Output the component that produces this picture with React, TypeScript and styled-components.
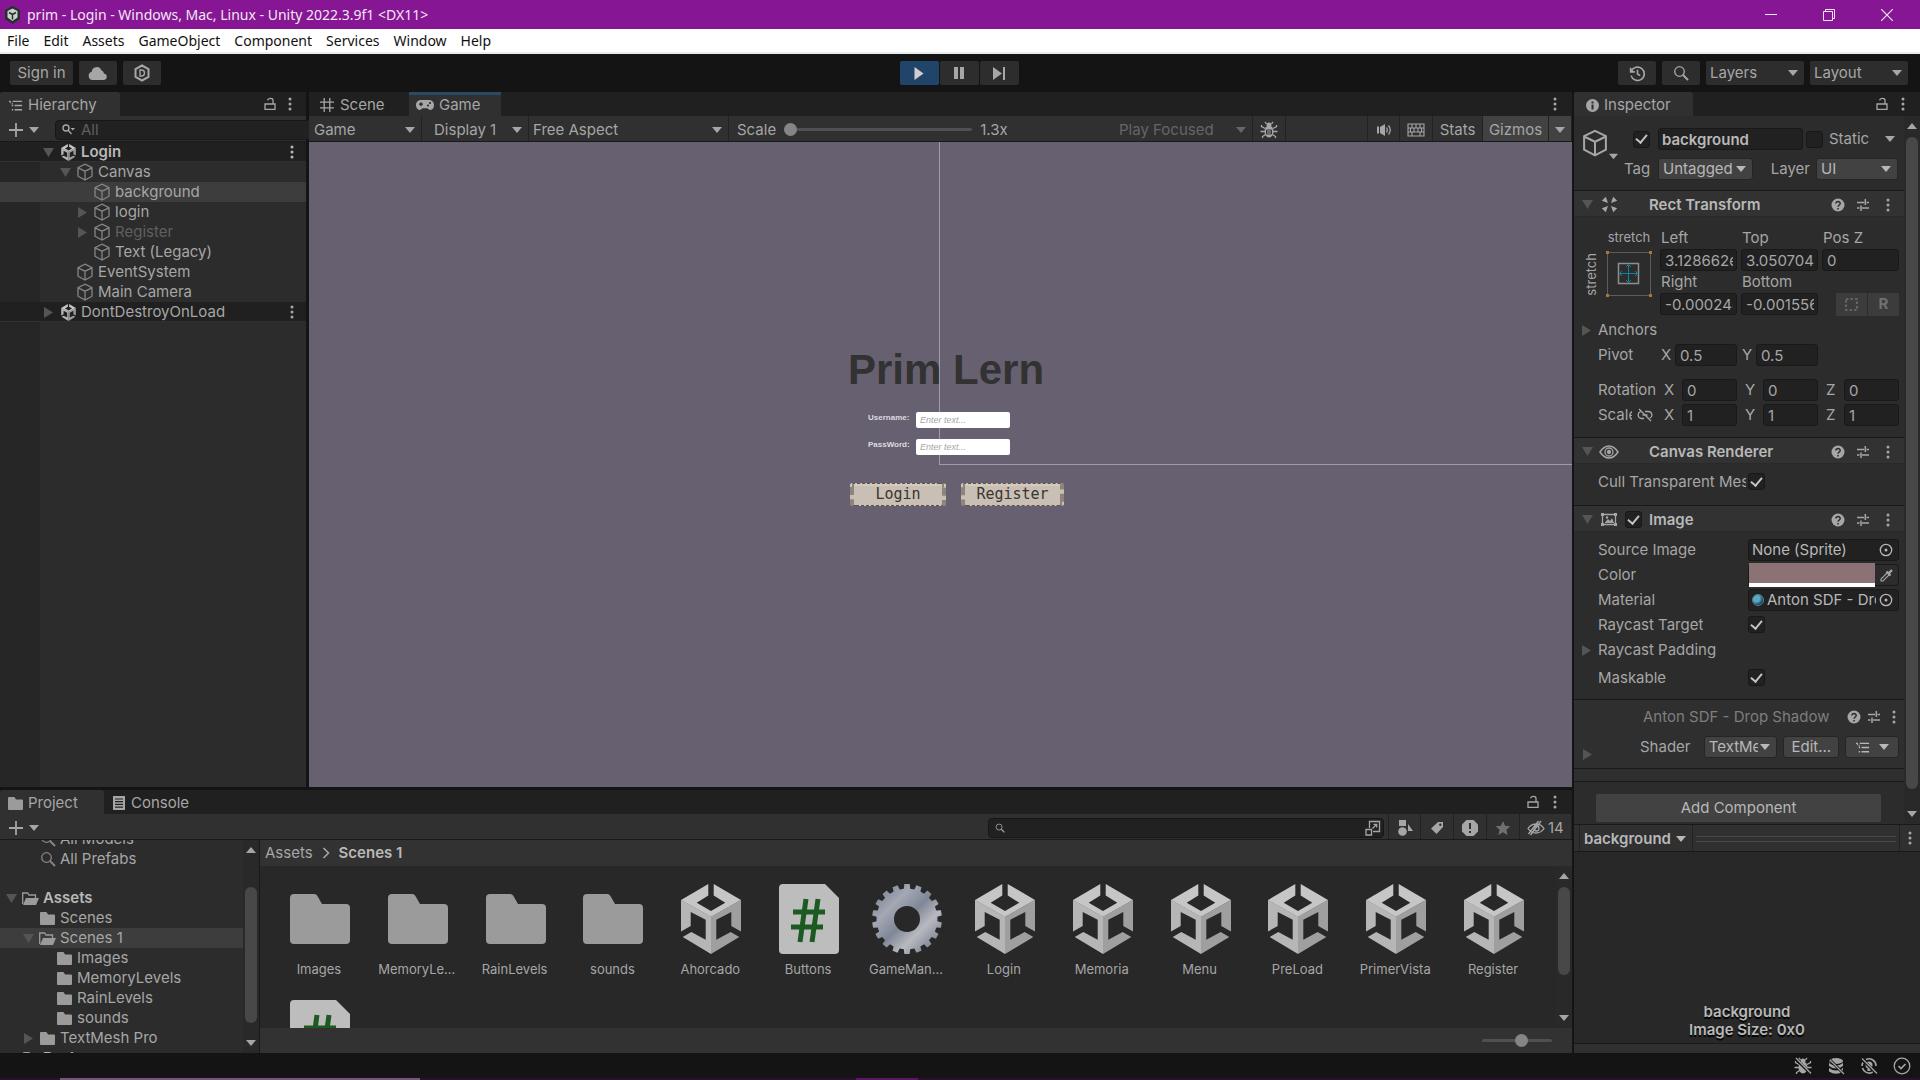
import React, { ReactNode } from 'react';
import styled, { createGlobalStyle, css } from 'styled-components';

const ui = '"Inter", "Liberation Sans", sans-serif';
const system = '"Noto Sans", "Open Sans", sans-serif';

const c = {
  frame: '#141414',
  tabBar: '#202020',
  bar: '#303030',
  panel: '#2c2c2c',
  deep: '#282828',
  field: '#212121',
  button: '#2d2d2d',
  raised: '#424242',
  line: '#191919',
  text: '#a6a6a6',
  bright: '#b8b8b8',
  dim: '#5f5f5f',
  selected: '#3d3d3d',
};

const GlobalStyle = createGlobalStyle`
  * { box-sizing: border-box; }
  body { margin: 0; background: ${c.frame}; color: ${c.text}; font: 15px/20px ${ui}; overflow: hidden; }
  button, input, select { font: inherit; color: inherit; margin: 0; }
  button { background: none; border: 0; padding: 0; }
  svg { display: block; flex: none; }
`;

/* ---------- Icons ---------- */

type IconProps = { w?: number; h?: number };

const Svg = ({ w = 16, h, box = '0 0 16 16', children }: IconProps & { box?: string; children: ReactNode }) => (
  <svg width={w} height={h ?? w} viewBox={box} fill="none" stroke="currentColor" strokeWidth="1.3" aria-hidden="true">
    {children}
  </svg>
);

const Caret = ({ dir = 'down', size = 10 }: { dir?: 'down' | 'up'; size?: number }) => (
  <svg width={size} height={size} viewBox="0 0 10 10" fill="currentColor" aria-hidden="true">
    <path d={dir === 'down' ? 'M0 2h10L5 8z' : 'M0 8h10L5 2z'} />
  </svg>
);

const FoldArrow = ({ dir }: { dir: 'down' | 'right' }) => (
  <svg width="11" height="11" viewBox="0 0 11 11" fill="currentColor" aria-hidden="true">
    <path d={dir === 'down' ? 'M0 1h11L5.500 10z' : 'M1 0v11l9-5.500z'} />
  </svg>
);

const UnityMark = ({ w = 60, h = 70 }: IconProps) => (
  <svg width={w} height={h} viewBox="0 0 60 70" aria-hidden="true">
    <path fill="#c6c6c6" d="M27.3 0 0 16l30 17 30-17L32.7 0v11.5l11.6 7.2L30 27l-14.3-8.3 11.6-7.2z" />
    <path fill="#b6b6b6" d="M0 15.8 30 32.8V70L1.7 53l8.6-5 14.4 7.7v-20L9.7 28v14L0 47.5z" />
    <path fill="#9f9f9f" d="M60 15.8 30 32.8V70l28.3-17-8.6-5-14.4 7.7v-20l15-7.7v14l9.7 5.5z" />
  </svg>
);

const CubeIcon = ({ w = 18 }: IconProps) => (
  <Svg w={w} box="0 0 18 18">
    <path d="M9 1.2 16 4.6v8.6l-7 3.8-7-3.8V4.6zM2 4.8l7 3.4 7-3.4M9 8.2V17" />
  </Svg>
);

const Dots = () => (
  <svg width="4" height="14" viewBox="0 0 4 14" fill="currentColor" aria-hidden="true">
    <circle cx="2" cy="2" r="1.5" />
    <circle cx="2" cy="7" r="1.5" />
    <circle cx="2" cy="12" r="1.5" />
  </svg>
);

const LockIcon = () => (
  <Svg w={14} h={14} box="0 0 14 14">
    <path d="M2 7h10v5.4H2zM10 7V3.2Q10 1.4 7.5 1.4T4.6 3.4" />
  </Svg>
);

const ListIcon = () => (
  <Svg w={15}>
    <path d="M5 3.5h10M7 8h8M7 12.5h8M1 3.5h2M4 8h1.5M4 12.5h1.5" strokeWidth="1.4" />
    <path d="M2.5 4v1.5M4.5 5v2" strokeWidth="1" />
  </Svg>
);

const GridIcon = () => (
  <Svg w={16}>
    <path d="M5.2 1v14M10.8 1v14M1 5.2h14M1 10.8h14" />
  </Svg>
);

const PadIcon = () => (
  <svg width="18" height="12" viewBox="0 0 18 12" aria-hidden="true">
    <path fill="currentColor" d="M5 1h8c3 0 5 2.200 5 5s-1.500 5-3.500 5c-1.500 0-2.500-1.800-3.500-1.800H7C6 9.200 5 11 3.500 11 1.500 11 0 8.800 0 6s2-5 5-5z" />
    <path stroke="#222" strokeWidth="1.300" d="M5 3.200v4M3 5.200h4" />
    <circle cx="12" cy="6.500" r="1" fill="#222" />
    <circle cx="14" cy="4" r="1" fill="#222" />
  </svg>
);

const PlusIcon = () => (
  <Svg w={16}>
    <path d="M8 1v14M1 8h14" strokeWidth="1.8" />
  </Svg>
);

const SearchIcon = ({ w = 16 }: IconProps) => (
  <Svg w={w}>
    <circle cx="6.500" cy="6.500" r="4.800" />
    <path d="m10 10 5 5" strokeWidth="2" />
  </Svg>
);

const FilterSearchIcon = () => (
  <svg width="13" height="11" viewBox="0 0 13 11" fill="none" stroke="currentColor" strokeWidth="1.400" aria-hidden="true">
    <circle cx="4" cy="4" r="3" />
    <path d="m6 6 3.500 4" />
    <path d="M8.500 4H13l-2.200 2.500z" fill="currentColor" stroke="none" />
  </svg>
);

const PopOutIcon = () => (
  <Svg w={16}>
    <path d="M4.500 8V1.500h10v10H8M1 9.500h5.500V15H1zM7.500 8.500l4-4M8.500 4.300h3.200v3.200" />
  </Svg>
);

const FolderIcon = ({ w = 15, h = 13 }: IconProps) => (
  <svg width={w} height={h} viewBox="0 0 60 50" fill="#9b9b9b" preserveAspectRatio="none" aria-hidden="true">
    <path d="M4 0h20c2 0 3 1 4 3l4 7h24q4 0 4 4v32q0 4-4 4H4q-4 0-4-4V4q0-4 4-4z" />
  </svg>
);

const OpenFolderIcon = () => (
  <svg width="17" height="13" viewBox="0 0 17 13" aria-hidden="true">
    <path d="M.7 12V1h5l1.300 2h6.500v3" fill="none" stroke="#9b9b9b" strokeWidth="1.300" />
    <path d="M4 6h13l-3 7H1z" fill="#9b9b9b" />
  </svg>
);

const HelpIcon = () => (
  <svg width="14" height="14" viewBox="0 0 14 14" aria-hidden="true">
    <circle cx="7" cy="7" r="6.500" fill="currentColor" />
    <path d="M4.800 5.600C4.800 2.800 9.300 3 9.200 5.500 9.200 7 7.200 7 7.100 8.700M7 10v1.500" stroke="#2d2d2d" strokeWidth="1.500" fill="none" />
  </svg>
);

const TuneIcon = () => (
  <Svg w={14} box="0 0 14 14">
    <path d="M1 4.500h7M10.500 4.500H13M9.300 1v6M1 10h2.500M6 10h7M5 7.500v5.500" strokeWidth="1.5" />
  </Svg>
);

const RectIcon = () => (
  <svg width="17" height="17" viewBox="0 0 17 17" fill="currentColor" aria-hidden="true">
    <path d="M7 7 .8 4.800 4.800.8zM10 7 12.200.8l4 4zM7 10 4.800 16.200l-4-4zM10 10l6.200 2.200-4 4z" />
  </svg>
);

const EyeIcon = () => (
  <Svg w={20} h={16} box="0 0 20 16">
    <path d="M1 8q4-6 9-6t9 6q-4 6-9 6T1 8z" strokeWidth="1.5" />
    <circle cx="10" cy="8" r="4" />
    <circle cx="10" cy="8" r="1.500" fill="currentColor" />
  </Svg>
);

const HiddenEyeIcon = () => (
  <Svg w={18} h={16} box="0 0 18 16">
    <path d="M1 8.500Q4 4 9 4t8 4.500Q14 13 9 13T1 8.500zM14 1 3.500 15M11.500 1 1.500 14" />
    <circle cx="9.500" cy="8.500" r="2.500" />
  </Svg>
);

const ImageIcon = () => (
  <Svg w={18} h={15} box="0 0 18 15">
    <path d="M2.500 2.500h13v10h-13z" />
    <path d="M4.500 11 8 7l2 2 2-3 2 5z" fill="currentColor" stroke="none" />
    <circle cx="7" cy="5.500" r="1.200" fill="currentColor" stroke="none" />
    <path d="M1 1h3v3H1zM14 1h3v3h-3zM1 11h3v3H1zM14 11h3v3h-3z" fill="currentColor" stroke="none" />
  </Svg>
);

const TargetIcon = () => (
  <Svg w={14} box="0 0 14 14">
    <circle cx="7" cy="7" r="5.700" />
    <circle cx="7" cy="7" r="1.500" fill="currentColor" stroke="none" />
  </Svg>
);

const DropperIcon = () => (
  <Svg w={14} box="0 0 14 14">
    <path d="M1 13v-2l6.500-6.500 2 2L3 13z" strokeWidth="1.1" />
    <path d="m6.500 3.500 4 4M8.500 5.500 12 2" strokeWidth="2.4" />
  </Svg>
);

const UnlinkIcon = () => (
  <Svg w={16} h={14} box="0 0 16 14">
    <path d="M7 10.500H4.500a3.500 3.500 0 0 1-1-6.800M8 3.500h3.500a3.500 3.500 0 0 1 1.300 6.700M5.500 7h5M2 1l12 12" />
  </Svg>
);

const BugIcon = ({ struck }: { struck?: boolean }) => (
  <Svg w={18} h={18} box="0 0 18 18">
    <ellipse cx="9" cy="10.500" rx="4.500" ry="6" fill="currentColor" stroke="none" />
    <circle cx="9" cy="4" r="2.500" fill="currentColor" stroke="none" />
    <path d="M6.500 3 5 .8M11.500 3 13 .8M5 7.500 1.500 5.500V4M13 7.500l3.500-2V4M5 10.500H.500M13 10.500h4.500M5.500 13.500l-3 2V17M12.500 13.500l3 2V17" />
    {struck ? (
      <path d="m1 1 16 16" stroke="#141414" strokeWidth="3" />
    ) : (
      <path d="M6.500 9h5v4h-5zM6.500 11h5" stroke="#303030" strokeWidth="1" />
    )}
    {struck && <path d="m2 1 15 15.500" />}
  </Svg>
);

const SpeakerIcon = () => (
  <Svg w={16}>
    <path d="M1 4.500h2v7H1zM4 5l5-3v12l-5-3z" fill="currentColor" stroke="none" />
    <path d="M10.500 5.500q1.500 2.500 0 5M12.500 3.500q3.500 4.500 0 9" />
  </Svg>
);

const KeyboardIcon = () => (
  <Svg w={18} h={14} box="0 0 18 14">
    <path d="M1 1h16v12H1zM1 5h16M1 9h16M5 1v4M9 1v4M13 1v4M3.500 5v4M7 5v4M11 5v4M14.500 5v4M5 9v4M13 9v4" strokeWidth="1.1" />
  </Svg>
);

const ShapesIcon = () => (
  <svg width="16" height="16" viewBox="0 0 16 16" fill="currentColor" aria-hidden="true">
    <path d="M2 0h7v6H2zM11 4l5 7h-5z" />
    <circle cx="5.500" cy="11.500" r="4.300" />
  </svg>
);

const TagIcon = () => (
  <svg width="14" height="14" viewBox="0 0 14 14" aria-hidden="true">
    <path fill="currentColor" d="M8 1h5v5L6.500 13 1 7.500z" />
    <circle cx="10.300" cy="3.700" r="1.200" fill="#303030" />
  </svg>
);

const AlertIcon = () => (
  <svg width="18" height="18" viewBox="0 0 18 18" aria-hidden="true">
    <path fill="currentColor" d="M5.500 1h7L17 5.500v7L12.500 17h-7L1 12.500v-7z" />
    <path d="M9 4v6M9 12v2" stroke="#303030" strokeWidth="2" />
  </svg>
);

const StarIcon = () => (
  <svg width="16" height="16" viewBox="0 0 16 16" fill="#707070" aria-hidden="true">
    <path d="m8 1 2.100 4.800 5.200.5-3.900 3.500 1.100 5.200L8 12.300 3.500 15l1.100-5.200L.700 6.300l5.200-.5z" />
  </svg>
);

const ConsoleIcon = () => (
  <svg width="14" height="14" viewBox="0 0 14 14" aria-hidden="true">
    <path fill="currentColor" d="M1 0h12v14H1z" />
    <path d="M3 3h8M3 5.700h8M3 8.400h8M3 11.100h8" stroke="#202020" strokeWidth="1.200" />
  </svg>
);

const CloudIcon = () => (
  <svg width="20" height="14" viewBox="0 0 20 14" fill="currentColor" aria-hidden="true">
    <path d="M4.500 14a4.200 4.200 0 0 1-.8-8.200 5 5 0 0 1 9.600-1.600A4 4 0 0 1 16 7.500 3.300 3.300 0 0 1 16 14z" />
  </svg>
);

const DevOpsIcon = () => (
  <Svg w={16} h={18} box="0 0 16 18">
    <path d="M8 1.500 14.500 5v8L8 16.500 1.500 13V5z" strokeWidth="2" />
    <path d="M6 6h1.500q3 0 3 3t-3 3H6z" strokeWidth="1.4" />
  </Svg>
);

const HistoryIcon = () => (
  <Svg w={17}>
    <path d="M2.200 6A6.300 6.300 0 1 1 2 10M1.500 2.500v4h4M8 4.500v4l2.500 1.500" strokeWidth="1.5" />
  </Svg>
);

const DatabaseOffIcon = () => (
  <Svg w={18} h={18} box="0 0 18 18">
    <ellipse cx="9" cy="4" rx="7" ry="3" fill="currentColor" stroke="none" />
    <path d="M2 6q7 5 14 0v3q-7 5-14 0zM2 11q7 5 14 0v3.500q-7 4.500-14 0z" fill="currentColor" stroke="none" />
    <path d="m3 3 13 13" stroke="#141414" strokeWidth="3" />
    <path d="m3 3 14 14" />
  </Svg>
);

const LightOffIcon = () => (
  <Svg w={18} h={18} box="0 0 18 18">
    <path d="M6 2.500a7 7 0 0 1 10 6.500M2 9q0-2 1-3.500M12 15.500A7 7 0 0 1 2.500 11M14.500 13l-2.500 2.500" strokeWidth="1.6" />
    <circle cx="9" cy="8" r="3.500" fill="currentColor" stroke="none" />
    <path d="M7.500 11h3v3h-3z" fill="currentColor" stroke="none" />
    <path d="m2 2 14 14" stroke="#141414" strokeWidth="3" />
    <path d="m2 1.500 15 15" />
  </Svg>
);

const CheckCircleIcon = () => (
  <Svg w={18} h={18} box="0 0 18 18">
    <circle cx="9" cy="9" r="7.800" />
    <path d="m5.500 9 2.500 2.500 4.500-4.500" strokeWidth="1.6" />
  </Svg>
);

const InfoIcon = () => (
  <svg width="13" height="13" viewBox="0 0 13 13" aria-hidden="true">
    <circle cx="6.500" cy="6.500" r="6.500" fill="currentColor" />
    <path d="M6.500 2.500v2M6.500 5.500v5" stroke="#2d2d2d" strokeWidth="2" />
  </svg>
);

const ScriptIcon = () => (
  <svg width="60" height="70" viewBox="0 0 60 70" aria-hidden="true">
    <path fill="#bdbdbd" d="M4 0h42l14 14v52q0 4-4 4H4q-4 0-4-4V4q0-4 4-4z" />
    <path stroke="#1d5a22" strokeWidth="5" d="m27 15-6 43M39 15l-6 43M14 28h32M12 43h32" fill="none" />
  </svg>
);

const gearPath = (() => {
  const teeth = 18;
  const step = (Math.PI * 2) / teeth;
  const at = (r: number, a: number) => `${(35 + r * Math.sin(a)).toFixed(2)} ${(35 - r * Math.cos(a)).toFixed(2)}`;
  const points: string[] = [];
  for (let i = 0; i < teeth; i += 1) {
    const a = i * step;
    points.push(at(30.5, a - step * 0.3), at(35, a - step * 0.22), at(35, a + step * 0.22), at(30.5, a + step * 0.3));
  }
  return `M${points.join('L')}ZM35 22a13 13 0 1 0 0 26a13 13 0 1 0 0-26Z`;
})();

const GearIcon = () => (
  <svg width="70" height="70" viewBox="0 0 70 70" aria-hidden="true">
    <defs>
      <linearGradient id="steel" x1="0" y1="0" x2="1" y2="1">
        <stop offset="0" stopColor="#6d7688" />
        <stop offset=".3" stopColor="#a3a8b4" />
        <stop offset=".5" stopColor="#7f8797" />
        <stop offset=".68" stopColor="#b9bac0" />
        <stop offset="1" stopColor="#5a6478" />
      </linearGradient>
    </defs>
    <path d={gearPath} fill="url(#steel)" fillRule="evenodd" />
  </svg>
);

/* ---------- Shared parts ---------- */

const Tabs = styled.div`
  display: flex;
  height: 24px;
  background: ${c.tabBar};
  padding-right: 6px;
`;

const Tab = styled.button<{ $on?: boolean; $accent?: boolean; $w: number; $inset?: number }>`
  display: flex;
  align-items: center;
  gap: 5px;
  width: ${(p) => p.$w}px;
  padding: 2px 0 0 ${(p) => p.$inset ?? 8}px;
  ${(p) => p.$on && css`background: ${c.bar}; border-radius: 3px 3px 0 0;`}
  ${(p) => p.$accent && css`box-shadow: inset 0 3px #2c4a66; border-radius: 0;`}
`;

const Spacer = styled.div`
  flex: 1;
`;

const IconButton = styled.button<{ $w?: number }>`
  display: grid;
  place-items: center;
  width: ${(p) => p.$w ?? 20}px;
  flex: none;
`;

const Bar = styled.div`
  display: flex;
  align-items: stretch;
  height: 26px;
  background: ${c.bar};
  border-bottom: 1px solid ${c.line};
`;

const AddButton = styled.button`
  display: flex;
  align-items: center;
  gap: 5px;
  padding: 2px 8px 0;
`;

const SearchBox = styled.label<{ $w?: number }>`
  display: flex;
  align-items: center;
  gap: 6px;
  height: 20px;
  align-self: center;
  margin: 2px 4px 0 8px;
  padding: 0 2px 0 6px;
  background: ${c.field};
  border: 1px solid #171717;
  border-radius: 4px;
  ${(p) => (p.$w ? css`width: ${p.$w}px;` : css`flex: 1;`)}
  input {
    flex: 1;
    min-width: 0;
    height: 18px;
    padding: 0;
    border: 0;
    outline: 0;
    background: none;
  }
  input::placeholder { color: ${c.dim}; }
`;

const PickRoot = styled.div<{ $w?: number; $tone?: 'flat' | 'raised' | 'tool'; $dim?: boolean; $pad?: number }>`
  display: grid;
  align-items: center;
  ${(p) => (p.$w ? css`width: ${p.$w}px;` : css`flex: 1; min-width: 0;`)}
  ${(p) => p.$dim && css`color: #666;`}
  ${(p) => p.$tone === 'raised' && css`height: 22px; background: ${c.raised}; border-radius: 3px; border: 1px solid #252525; color: ${c.bright};`}
  ${(p) => p.$tone === 'tool' && css`height: 24px; background: ${c.button}; border-radius: 2px;`}
  select {
    grid-area: 1 / 1;
    appearance: none;
    border: 0;
    outline: 0;
    background: none;
    width: 100%;
    min-width: 0;
    height: 20px;
    line-height: 20px;
    padding: 0 18px 0 ${(p) => p.$pad ?? 4}px;
  }
  svg {
    grid-area: 1 / 1;
    justify-self: end;
    margin-right: 6px;
    pointer-events: none;
  }
`;

type PickProps = { label: string; value: string; w?: number; tone?: 'flat' | 'raised' | 'tool'; dim?: boolean; pad?: number };

const Pick = ({ label, value, w, tone, dim, pad }: PickProps) => (
  <PickRoot $w={w} $tone={tone} $dim={dim} $pad={pad}>
    <select aria-label={label} defaultValue={value}>
      <option>{value}</option>
    </select>
    <Caret />
  </PickRoot>
);

const Slider = styled.input<{ $w: number; $knob: number }>`
  appearance: none;
  width: ${(p) => p.$w}px;
  height: 14px;
  align-self: center;
  background: none;
  &::-webkit-slider-runnable-track {
    height: 3px;
    background: #505050;
    border-radius: 2px;
  }
  &::-webkit-slider-thumb {
    appearance: none;
    width: ${(p) => p.$knob}px;
    height: ${(p) => p.$knob}px;
    margin-top: -5px;
    border-radius: 50%;
    background: #858585;
  }
`;

const Check = styled.input.attrs({ type: 'checkbox' })`
  appearance: none;
  display: grid;
  place-items: center;
  flex: none;
  width: 17px;
  height: 17px;
  background: ${c.field};
  border: 1px solid #181818;
  border-radius: 3px;
  &:checked::after {
    content: '';
    width: 5px;
    height: 9px;
    margin-bottom: 3px;
    border: solid #c4c4c4;
    border-width: 0 2px 2px 0;
    transform: rotate(40deg);
  }
`;

const ScrollRail = styled.div`
  display: flex;
  flex-direction: column;
  align-items: center;
  width: 16px;
  flex: none;
  background: #292929;
  padding: 5px 0;
`;

const ScrollTrack = styled.div<{ $from: number; $to: number }>`
  flex: 1;
  display: flex;
  width: 12px;
  padding: ${(p) => p.$from}px 0 ${(p) => p.$to}px;
  &::before {
    content: '';
    flex: 1;
    border-radius: 6px;
    background: #484848;
  }
`;

const Scroll = ({ from, to }: { from: number; to: number }) => (
  <ScrollRail>
    <Caret dir="up" />
    <ScrollTrack $from={from} $to={to} />
    <Caret />
  </ScrollRail>
);

/* ---------- Window frame ---------- */

const Window = styled.div`
  display: grid;
  grid-template-rows: 29px 25px 38px minmax(0, 1fr) 25px 2px;
  height: 100vh;
  overflow: hidden;
`;

const TitleBar = styled.header`
  display: flex;
  align-items: center;
  padding: 0 4px 0 5px;
  gap: 7px;
  background: #861693;
  color: #f3e6f5;
  font: 14px/20px ${system};
`;

const MenuBar = styled.nav`
  display: flex;
  align-items: center;
  gap: 14px;
  padding: 1px 7px 0;
  background: #fff;
  border-bottom: 2px solid #ececec;
  color: #111;
  font: 14px/20px ${system};
`;

const MainBar = styled.div`
  display: grid;
  grid-template-columns: 1fr auto 1fr;
  align-items: start;
  padding: 7px 12px 0 10px;
`;

const Group = styled.div<{ $gap: number; $end?: boolean }>`
  display: flex;
  align-items: center;
  gap: ${(p) => p.$gap}px;
  justify-content: ${(p) => (p.$end ? 'flex-end' : 'flex-start')};
`;

const ToolButton = styled.button<{ $w: number; $on?: boolean }>`
  display: grid;
  place-items: center;
  width: ${(p) => p.$w}px;
  height: 24px;
  border-radius: 2px;
  background: ${(p) => (p.$on ? '#21456a' : c.button)};
  color: ${(p) => (p.$on ? '#cfcfcf' : c.text)};
`;

const Main = styled.main`
  display: grid;
  grid-template-columns: minmax(0, 1fr) 346px;
  grid-template-rows: minmax(0, 1fr);
  gap: 2px;
  min-height: 0;
`;

const Workspace = styled.div`
  display: grid;
  grid-template-rows: minmax(0, 1fr) 263px;
  gap: 3px;
  min-height: 0;
`;

const Upper = styled.div`
  display: grid;
  grid-template-columns: 306px minmax(0, 1fr);
  gap: 3px;
  min-height: 0;
`;

const Panel = styled.section`
  display: flex;
  flex-direction: column;
  min-width: 0;
  min-height: 0;
  background: ${c.panel};
`;

/* ---------- Hierarchy ---------- */

const HierarchyList = styled.div`
  flex: 1;
  background: linear-gradient(90deg, #262626 40px, ${c.panel} 40px);
`;

const TreeRow = styled.div<{ $depth: number; $base: number; $scene?: boolean; $on?: boolean; $off?: boolean; $bold?: boolean }>`
  display: flex;
  align-items: center;
  height: 20px;
  padding: 0 12px 0 ${(p) => p.$base + p.$depth * 17}px;
  ${(p) => p.$scene && css`background: ${c.tabBar}; box-shadow: inset 0 -1px #303030;`}
  ${(p) => p.$on && css`background: ${c.selected};`}
  ${(p) => p.$off && css`color: ${c.dim};`}
  ${(p) => p.$bold && css`font-weight: 600; color: ${c.bright};`}
`;

const Fold = styled.button<{ $w?: number }>`
  display: grid;
  place-items: center;
  width: ${(p) => p.$w ?? 16}px;
  flex: none;
  color: #555;
`;

const Glyph = styled.span<{ $w: number }>`
  display: grid;
  place-items: center;
  width: ${(p) => p.$w}px;
  flex: none;
  margin: 0 4px 0 3px;
  color: #858585;
`;

const hierarchy = [
  { name: 'Login', depth: 0, fold: 'down', scene: true, bold: true },
  { name: 'Canvas', depth: 1, fold: 'down' },
  { name: 'background', depth: 2, on: true },
  { name: 'login', depth: 2, fold: 'right' },
  { name: 'Register', depth: 2, fold: 'right', off: true },
  { name: 'Text (Legacy)', depth: 2 },
  { name: 'EventSystem', depth: 1 },
  { name: 'Main Camera', depth: 1 },
  { name: 'DontDestroyOnLoad', depth: 0, fold: 'right', scene: true },
] as { name: string; depth: number; fold?: 'down' | 'right'; scene?: boolean; bold?: boolean; on?: boolean; off?: boolean }[];

const Hierarchy = () => (
  <Panel>
    <Tabs>
      <Tab $on $w={120}><ListIcon />Hierarchy</Tab>
      <Spacer />
      <IconButton $w={21} aria-label="Lock hierarchy"><LockIcon /></IconButton>
      <IconButton $w={20} aria-label="Hierarchy menu"><Dots /></IconButton>
    </Tabs>
    <Bar>
      <AddButton aria-label="Create"><PlusIcon /><Caret /></AddButton>
      <SearchBox>
        <FilterSearchIcon />
        <input placeholder="All" aria-label="Search hierarchy" />
        <PopOutIcon />
      </SearchBox>
    </Bar>
    <HierarchyList>
      {hierarchy.map((r) => (
        <TreeRow key={r.name} $base={40} $depth={r.depth} $scene={r.scene} $on={r.on} $off={r.off} $bold={r.bold}>
          <Fold aria-label={`Toggle ${r.name}`}>{r.fold && <FoldArrow dir={r.fold} />}</Fold>
          <Glyph $w={18}>{r.scene ? <UnityMark w={15} h={17} /> : <CubeIcon />}</Glyph>
          {r.name}
          <Spacer />
          {r.scene && <Dots />}
        </TreeRow>
      ))}
    </HierarchyList>
  </Panel>
);

/* ---------- Game view ---------- */

const Cell = styled.div<{ $w?: number; $lit?: boolean }>`
  display: flex;
  align-items: center;
  justify-content: center;
  flex: none;
  padding-top: 2px;
  ${(p) => p.$w && css`width: ${p.$w}px;`}
  border-right: 1px solid #222;
  ${(p) => p.$lit && css`background: #424242;`}
`;

const ScaleGroup = styled.label`
  display: flex;
  align-items: center;
  gap: 8px;
  padding: 2px 0 0 8px;
`;

const View = styled.div`
  position: relative;
  flex: 1;
  display: grid;
  place-items: center;
  padding: 0 0 79px 31px;
  background: #676070;
`;

const CanvasOutline = styled.div`
  position: absolute;
  inset: 0 0 50% 49.9%;
  border: solid #a09ba6;
  border-width: 0 0 1px 1px;
`;

const GameForm = styled.form`
  position: relative;
  width: 216px;
  font-family: "Liberation Sans", Arial, sans-serif;
`;

const GameTitle = styled.h1`
  margin: 0;
  font-size: 42px;
  line-height: 50px;
  color: #323232;
  white-space: nowrap;
`;

const Field = styled.label`
  display: grid;
  grid-template-columns: 48px 94px;
  align-items: start;
  margin: 17px 0 -7px 20px;
  height: 17px;
  font-size: 8px;
  line-height: 12px;
  font-weight: 700;
  color: #dddae0;
  input {
    height: 16px;
    padding: 0 4px;
    border: 0;
    border-radius: 2px;
    background: #fff;
    font-size: 9px;
    font-weight: 400;
  }
  input::placeholder { color: #a5a5a5; font-style: italic; }
`;

const FormButtons = styled.div`
  display: flex;
  gap: 15px;
  padding: 34px 0 0 2px;
`;

const StoneButton = styled.button<{ $w: number }>`
  width: ${(p) => p.$w}px;
  height: 23px;
  background: linear-gradient(#d3cabf 2px, #c9bfb4 2px);
  border: 1px dashed #5c544d;
  border-width: 1px 4px;
  border-color: #5c544d #8d857c;
  border-radius: 2px;
  color: #3a3530;
  font: 15px/20px "DejaVu Sans Mono", monospace;
`;

const Game = () => (
  <Panel>
    <Tabs>
      <Tab $w={100} $inset={10}><GridIcon />Scene</Tab>
      <Tab $on $accent $w={92} $inset={7}><PadIcon />Game</Tab>
      <Spacer />
      <IconButton $w={22} aria-label="Game menu"><Dots /></IconButton>
    </Tabs>
    <Bar>
      <Cell><Pick w={112} pad={5} label="View" value="Game" /></Cell>
      <Cell><Pick w={106} pad={12} label="Display" value="Display 1" /></Cell>
      <Cell><Pick w={199} label="Aspect" value="Free Aspect" /></Cell>
      <ScaleGroup>
        Scale
        <Slider type="range" $w={188} $knob={13} min={0} max={100} defaultValue={0} />
        <span>1.3x</span>
      </ScaleGroup>
      <Spacer />
      <Cell><Pick w={138} pad={5} dim label="Play mode" value="Play Focused" /></Cell>
      <Cell $w={33}><BugIcon /></Cell>
      <Cell $w={82} />
      <Cell $w={32}><SpeakerIcon /></Cell>
      <Cell $w={33}><KeyboardIcon /></Cell>
      <Cell as="button" $w={50}>Stats</Cell>
      <Cell as="button" $lit $w={66}>Gizmos</Cell>
      <Cell as="button" $lit $w={23} aria-label="Gizmos options"><Caret /></Cell>
    </Bar>
    <View>
      <CanvasOutline />
      <GameForm onSubmit={(e) => e.preventDefault()}>
        <GameTitle>Prim Lern</GameTitle>
        <Field>Username:<input placeholder="Enter text..." /></Field>
        <Field>PassWord:<input type="password" placeholder="Enter text..." /></Field>
        <FormButtons>
          <StoneButton $w={96}>Login</StoneButton>
          <StoneButton $w={103}>Register</StoneButton>
        </FormButtons>
      </GameForm>
    </View>
  </Panel>
);

/* ---------- Project ---------- */

const ProjectBody = styled.div`
  display: grid;
  grid-template-columns: 259px minmax(0, 1fr);
  grid-template-rows: minmax(0, 1fr);
  gap: 1px;
  flex: 1;
  min-height: 0;
  background: ${c.line};
`;

const TreePane = styled.div`
  display: flex;
  min-height: 0;
  overflow: hidden;
  background: ${c.panel};
`;

const TreeScroll = styled.div`
  flex: 1;
  min-width: 0;
  margin-top: -11px;
`;

const TreeGap = styled.div`
  height: 19px;
`;

const AssetPane = styled.div`
  display: grid;
  grid-template-rows: 26px minmax(0, 1fr) 25px;
  min-height: 0;
  background: ${c.bar};
`;

const Crumbs = styled.div`
  display: flex;
  align-items: center;
  gap: 9px;
  padding-left: 5px;
  background: #323232;
  strong { font-weight: 600; color: ${c.bright}; }
`;

const AssetArea = styled.div`
  display: flex;
  min-height: 0;
  overflow: hidden;
  background: ${c.deep};
`;

const AssetGrid = styled.div`
  flex: 1;
  display: grid;
  grid-template-columns: repeat(auto-fill, minmax(92px, 1fr));
  grid-auto-rows: 116px;
  padding: 18px 13px 0 11px;
`;

const Asset = styled.figure`
  display: flex;
  flex-direction: column;
  align-items: center;
  margin: 0;
  font-size: 13px;
  > div {
    display: grid;
    place-items: center;
    height: 70px;
  }
  figcaption { margin-top: 5px; padding-right: 2px; }
`;

const ZoomBar = styled.div`
  display: flex;
  justify-content: flex-end;
  padding-right: 20px;
  background: #323232;
`;

const folders = [
  { name: 'All Models', depth: 1, kind: 'search' },
  { name: 'All Prefabs', depth: 1, kind: 'search' },
  { name: '', depth: 0, kind: 'gap' },
  { name: 'Assets', depth: 0, kind: 'open', fold: 'down', bold: true },
  { name: 'Scenes', depth: 1, kind: 'folder' },
  { name: 'Scenes 1', depth: 1, kind: 'open', fold: 'down', on: true },
  { name: 'Images', depth: 2, kind: 'folder' },
  { name: 'MemoryLevels', depth: 2, kind: 'folder' },
  { name: 'RainLevels', depth: 2, kind: 'folder' },
  { name: 'sounds', depth: 2, kind: 'folder' },
  { name: 'TextMesh Pro', depth: 1, kind: 'folder', fold: 'right' },
  { name: 'Packages', depth: 0, kind: 'folder', fold: 'right', bold: true },
] as { name: string; depth: number; kind: string; fold?: 'down' | 'right'; bold?: boolean; on?: boolean }[];

const assets: [string, 'folder' | 'scene' | 'script' | 'gear'][] = [
  ['Images', 'folder'],
  ['MemoryLe...', 'folder'],
  ['RainLevels', 'folder'],
  ['sounds', 'folder'],
  ['Ahorcado', 'scene'],
  ['Buttons', 'script'],
  ['GameMan...', 'gear'],
  ['Login', 'scene'],
  ['Memoria', 'scene'],
  ['Menu', 'scene'],
  ['PreLoad', 'scene'],
  ['PrimerVista', 'scene'],
  ['Register', 'scene'],
  ['', 'script'],
];

const assetArt = {
  folder: <FolderIcon w={60} h={50} />,
  scene: <UnityMark />,
  script: <ScriptIcon />,
  gear: <GearIcon />,
};

const folderArt: Record<string, ReactNode> = {
  search: <SearchIcon />,
  open: <OpenFolderIcon />,
  folder: <FolderIcon />,
};

const Project = () => (
  <Panel>
    <Tabs>
      <Tab $on $w={104}><FolderIcon />Project</Tab>
      <Tab $w={100}><ConsoleIcon />Console</Tab>
      <Spacer />
      <IconButton $w={22} aria-label="Lock project"><LockIcon /></IconButton>
      <IconButton $w={22} aria-label="Project menu"><Dots /></IconButton>
    </Tabs>
    <Bar>
      <AddButton aria-label="Create asset"><PlusIcon /><Caret /></AddButton>
      <Spacer />
      <SearchBox $w={396}>
        <SearchIcon w={10} />
        <input aria-label="Search project" />
        <PopOutIcon />
      </SearchBox>
      <Cell $w={1} />
      <Cell $w={32}><ShapesIcon /></Cell>
      <Cell $w={33}><TagIcon /></Cell>
      <Cell $w={33}><AlertIcon /></Cell>
      <Cell $w={33}><StarIcon /></Cell>
      <Cell $w={52}><HiddenEyeIcon />&thinsp;14</Cell>
    </Bar>
    <ProjectBody>
      <TreePane>
        <TreeScroll>
          {folders.map((f) =>
            f.kind === 'gap' ? (
              <TreeGap key="gap" />
            ) : (
              <TreeRow key={f.name} $base={3} $depth={f.depth} $on={f.on} $bold={f.bold}>
                <Fold aria-label={`Toggle ${f.name}`}>{f.fold && <FoldArrow dir={f.fold} />}</Fold>
                <Glyph $w={17}>{folderArt[f.kind]}</Glyph>
                {f.name}
              </TreeRow>
            ),
          )}
        </TreeScroll>
        <Scroll from={32} to={15} />
      </TreePane>
      <AssetPane>
        <Crumbs>
          Assets
          <Svg w={8} h={12} box="0 0 8 12"><path d="m1.500 1 5 5-5 5" strokeWidth="1.600" /></Svg>
          <strong>Scenes 1</strong>
        </Crumbs>
        <AssetArea>
          <AssetGrid>
            {assets.map(([name, kind], i) => (
              <Asset key={i}>
                <div>{assetArt[kind]}</div>
                <figcaption>{name}</figcaption>
              </Asset>
            ))}
          </AssetGrid>
          <Scroll from={6} to={38} />
        </AssetArea>
        <ZoomBar>
          <Slider type="range" aria-label="Icon size" $w={70} $knob={13} min={0} max={100} defaultValue={58} />
        </ZoomBar>
      </AssetPane>
    </ProjectBody>
  </Panel>
);

/* ---------- Inspector ---------- */

const InspectorBody = styled.div`
  display: flex;
  height: 709px;
  overflow: hidden;
  border-bottom: 1px solid ${c.line};
`;

const InspectorContent = styled.div`
  flex: 1;
  min-width: 0;
`;

const ObjectHeader = styled.div`
  display: grid;
  grid-template-columns: 50px minmax(0, 1fr);
  padding: 12px 6px 0 0;
  height: 74px;
`;

const ObjectIcon = styled.div`
  display: flex;
  align-items: flex-end;
  padding-left: 7px;
  height: 33px;
  svg:first-child { margin-bottom: 4px; }
`;

const ObjectRow = styled.div`
  display: flex;
  align-items: center;
  height: 22px;
  margin-bottom: 8px;
`;

const ObjectLabel = styled.span<{ $w: number; $right?: boolean }>`
  width: ${(p) => p.$w}px;
  padding-right: 6px;
  text-align: ${(p) => (p.$right ? 'right' : 'left')};
`;

const ActiveSlot = styled.div`
  width: 34px;
  padding-left: 9px;
`;

const StaticLabel = styled.label`
  display: flex;
  align-items: center;
  gap: 6px;
  margin-left: 3px;
`;

const TextField = styled.input<{ $bold?: boolean; $w?: number }>`
  ${(p) => (p.$w ? css`width: ${p.$w}px;` : css`flex: 1;`)}
  min-width: 0;
  height: 22px;
  padding: 0 3px 0 4px;
  border: 1px solid #191919;
  border-radius: 3px;
  outline: 0;
  background: ${c.field};
  ${(p) => p.$bold && css`font-weight: 600; color: ${c.bright}; padding-left: 3px;`}
`;

const ComponentHead = styled.div`
  display: grid;
  grid-template-columns: 26px 18px 31px minmax(0, 1fr) 25px 25px 25px;
  align-items: center;
  justify-items: center;
  height: 27px;
  padding: 1px 4px 0 0;
  background: #323232;
  border-top: 1px solid ${c.line};
  box-shadow: inset 0 -1px #292929;
  strong { justify-self: start; font-weight: 600; color: ${c.bright}; }
`;

const Head = ({ name, icon, toggle }: { name: string; icon: ReactNode; toggle?: boolean }) => (
  <ComponentHead>
    <Fold aria-label={`Collapse ${name}`}><FoldArrow dir="down" /></Fold>
    {icon}
    <span>{toggle && <Check defaultChecked aria-label={`${name} enabled`} />}</span>
    <strong>{name}</strong>
    <HelpIcon />
    <TuneIcon />
    <Dots />
  </ComponentHead>
);

const RectGrid = styled.div`
  display: grid;
  grid-template-columns: 86px minmax(0, 1fr);
  padding: 10px 5px 0 0;
`;

const AnchorPreview = styled.div`
  display: grid;
  grid-template-columns: 24px 46px;
  grid-template-rows: 20px 54px;
  column-gap: 3px;
  padding-left: 5px;
  justify-items: center;
  align-items: center;
  font-size: 13px;
  span:first-child { grid-column: 2; }
  span:nth-child(2) { writing-mode: vertical-rl; transform: rotate(180deg); }
`;

const Offsets = styled.div`
  display: grid;
  grid-template-columns: repeat(3, minmax(0, 1fr));
  grid-auto-rows: 22px;
  column-gap: 4px;
  align-items: center;
`;

const OffsetLabel = styled.label<{ $order: number }>`
  order: ${(p) => p.$order};
  padding-left: 1px;
`;

const OffsetField = styled(TextField)<{ $order: number }>`
  order: ${(p) => p.$order};
  width: 100%;
`;

const ModeButtons = styled.div`
  order: 4;
  display: flex;
  gap: 1px;
  padding-left: 14px;
  color: #707070;
  button {
    flex: 1;
    display: grid;
    place-items: center;
    height: 23px;
    background: #3c3c3c;
    font-weight: 700;
  }
`;

const VectorRow = styled.div<{ $gap: number }>`
  display: grid;
  grid-template-columns: 62px minmax(0, 1fr);
  align-items: center;
  height: 22px;
  margin: ${(p) => p.$gap}px 5px 0 24px;
`;

const VectorName = styled.span`
  display: flex;
  align-items: center;
  gap: 5px;
  white-space: nowrap;
  span { width: 34px; overflow: hidden; }
`;

const Axes = styled.div<{ $letter: number }>`
  display: grid;
  grid-template-columns: repeat(3, minmax(0, 1fr));
  column-gap: 4px;
  label { display: flex; align-items: center; }
  label > span {
    width: ${(p) => p.$letter}px;
    padding-left: ${(p) => (p.$letter > 20 ? 4 : 1)}px;
    flex: none;
  }
`;

const FoldRow = styled.div<{ $top?: number }>`
  display: flex;
  align-items: center;
  height: 22px;
  margin-top: ${(p) => p.$top ?? 0}px;
`;

const Props = styled.div<{ $bottom: number }>`
  padding: 5px 5px ${(p) => p.$bottom}px 0;
`;

const PropRow = styled.div<{ $top?: number }>`
  display: grid;
  grid-template-columns: 24px 148px minmax(0, 1fr);
  column-gap: 1px;
  align-items: center;
  justify-items: start;
  height: 25px;
  margin-top: ${(p) => p.$top ?? 0}px;
  > label, > span { max-width: 100%; overflow: hidden; white-space: nowrap; grid-column: 2; margin-left: -1px; }
`;

const ObjectField = styled.button`
  display: flex;
  align-items: center;
  gap: 3px;
  width: 100%;
  height: 22px;
  padding: 0 5px 0 3px;
  background: ${c.field};
  border: 1px solid #191919;
  border-radius: 3px;
  color: ${c.bright};
  > span { flex: 1; overflow: hidden; white-space: nowrap; text-align: left; }
`;

const ColorField = styled.button`
  display: flex;
  align-items: center;
  width: 100%;
  height: 22px;
  padding-right: 4px;
  border: 1px solid #191919;
  gap: 5px;
  border-radius: 3px;
  &::before {
    content: '';
    flex: 1;
    height: 20px;
    background: #8b7275;
    border-bottom: 4px solid #fff;
  }
`;

const Ball = styled.i`
  width: 12px;
  height: 12px;
  border-radius: 50%;
  border: 1px solid #5b7f92;
  background: radial-gradient(circle at 35% 35%, #57a9c8 35%, #1c3f52 70%);
`;

const MaterialBox = styled.div`
  height: 69px;
  padding-top: 6px;
  border-top: 1px solid ${c.line};
  background: #2f2f2f;
`;

const MaterialTitle = styled.div`
  display: flex;
  align-items: center;
  height: 22px;
  margin-left: 69px;
  color: #7e7e7e;
  > span { flex: 1; overflow: hidden; white-space: nowrap; margin-right: 6px; }
  > div {
    display: grid;
    grid-template-columns: repeat(3, 20px);
    place-items: center;
    color: ${c.text};
  }
`;

const ShaderRow = styled.div`
  display: flex;
  align-items: center;
  gap: 6px;
  height: 22px;
  margin-top: 8px;
  padding-right: 5px;
  > ${Fold} { width: 26px; margin: 14px 34px 0 0; }
  > span { width: 58px; }
`;

const RaisedButton = styled.button<{ $w: number }>`
  display: flex;
  align-items: center;
  justify-content: space-evenly;
  width: ${(p) => p.$w}px;
  height: 22px;
  background: ${c.raised};
  border: 1px solid #252525;
  border-radius: 3px;
  color: ${c.bright};
`;

const Footer = styled.div`
  height: 14px;
  border: solid ${c.line};
  border-width: 1px 0;
  background: #2f2f2f;
`;

const AddComponent = styled.button`
  display: block;
  width: calc(100% - 45px);
  height: 28px;
  margin: 12px 0 0 22px;
  border-radius: 2px;
  background: ${c.raised};
  color: ${c.bright};
`;

const PreviewBar = styled.div`
  display: flex;
  height: 27px;
  padding-left: 5px;
  background: ${c.bar};
  border-bottom: 1px solid ${c.line};
`;

const PreviewPick = styled.button`
  display: flex;
  align-items: center;
  gap: 5px;
  padding: 2px 6px 0 4px;
  border: solid #222;
  border-width: 0 1px;
  font-weight: 600;
  color: ${c.bright};
`;

const Grip = styled.div`
  flex: 1;
  align-self: center;
  height: 6px;
  margin: 2px 3px 0;
  border: solid #484848;
  border-width: 1px 0;
`;

const Preview = styled.div`
  flex: 1;
  display: flex;
  flex-direction: column;
  align-items: center;
  justify-content: flex-end;
  padding-bottom: 4px;
  background: ${c.deep};
  border-bottom: 1px solid ${c.line};
  font-weight: 600;
  line-height: 18px;
  color: ${c.bright};
  text-shadow: 0 2px 1px #000;
`;

const PreviewFoot = styled.div`
  height: 9px;
  background: ${c.bar};
`;

const offsets: [string, string, number][] = [
  ['Left', '3.128662e-06', 1],
  ['Top', '3.050704e-05', 1],
  ['Pos Z', '0', 1],
  ['Right', '-0.000244', 3],
  ['Bottom', '-0.001556', 3],
];

const AxisFields = ({ name, values, letter }: { name: string; values: string[]; letter: number }) => (
  <Axes $letter={letter}>
    {values.map((v, i) => (
      <label key={i}>
        <span>{'XYZ'[i]}</span>
        <TextField defaultValue={v} aria-label={`${name} ${'XYZ'[i]}`} />
      </label>
    ))}
  </Axes>
);

const Inspector = () => (
  <Panel>
    <Tabs>
      <Tab $on $w={119} $inset={12}><InfoIcon />Inspector</Tab>
      <Spacer />
      <IconButton $w={21} aria-label="Lock inspector"><LockIcon /></IconButton>
      <IconButton $w={22} aria-label="Inspector menu"><Dots /></IconButton>
    </Tabs>
    <InspectorBody>
      <InspectorContent>
        <ObjectHeader>
          <ObjectIcon><CubeIcon w={28} /><Caret size={9} /></ObjectIcon>
          <div>
            <ObjectRow>
              <ActiveSlot><Check defaultChecked aria-label="Active" /></ActiveSlot>
              <TextField $bold $w={145} defaultValue="background" aria-label="Name" />
              <StaticLabel><Check />Static</StaticLabel>
              <Spacer />
              <IconButton $w={16} aria-label="Static options"><Caret /></IconButton>
            </ObjectRow>
            <ObjectRow>
              <ObjectLabel $w={34}>Tag</ObjectLabel>
              <Pick label="Tag" value="Untagged" tone="raised" w={95} />
              <ObjectLabel $w={63} $right>Layer</ObjectLabel>
              <Pick label="Layer" value="UI" tone="raised" />
            </ObjectRow>
          </div>
        </ObjectHeader>

        <Head name="Rect Transform" icon={<RectIcon />} />
        <RectGrid>
          <AnchorPreview>
            <span>stretch</span>
            <span>stretch</span>
            <svg width="46" height="46" viewBox="0 0 46 46" fill="none" aria-hidden="true">
              <path d="M1.500 1.500h43v43h-43z" stroke="#5c5c5c" />
              <path d="M12.500 12.500h20v20h-20z" stroke="#8e8e8e" strokeWidth="1.500" />
              <path d="M22.500 14v17M14 22.500h17M20 16l2.500-2.500L25 16M20 29l2.500 2.500L25 29M16 20l-2.500 2.500L16 25M29 20l2.500 2.500L29 25" stroke="#12809f" />
              <path d="M0 0h3v3H0zM43 0h3v3h-3zM0 43h3v3H0zM43 43h3v3h-3z" fill="#a67a2c" />
            </svg>
          </AnchorPreview>
          <Offsets>
            {offsets.map(([name, value, order]) => (
              <React.Fragment key={name}>
                <OffsetLabel $order={order} htmlFor={`rt-${name}`}>{name}</OffsetLabel>
                <OffsetField $order={order + 1} id={`rt-${name}`} defaultValue={value} />
              </React.Fragment>
            ))}
            <OffsetLabel as="span" $order={3} />
            <ModeButtons>
              <button aria-label="Blueprint mode">
                <Svg w={13} box="0 0 13 13"><path d="M1 1h11v11H1z" strokeDasharray="2.500 2" strokeWidth="1.600" /></Svg>
              </button>
              <button>R</button>
            </ModeButtons>
          </Offsets>
        </RectGrid>
        <FoldRow $top={4}><Fold $w={24} aria-label="Expand anchors"><FoldArrow dir="right" /></Fold>Anchors</FoldRow>
        <VectorRow $gap={3}><VectorName>Pivot</VectorName><AxisFields name="Pivot" values={['0.5', '0.5']} letter={15} /></VectorRow>
        <VectorRow $gap={13}><VectorName>Rotation</VectorName><AxisFields name="Rotation" values={['0', '0', '0']} letter={22} /></VectorRow>
        <VectorRow $gap={3}><VectorName><span>Scale</span><UnlinkIcon /></VectorName><AxisFields name="Scale" values={['1', '1', '1']} letter={22} /></VectorRow>
        <Props $bottom={6} />

        <Head name="Canvas Renderer" icon={<EyeIcon />} />
        <Props $bottom={11}>
          <PropRow><label htmlFor="cull">Cull Transparent Mesh</label><Check id="cull" defaultChecked /></PropRow>
        </Props>

        <Head name="Image" icon={<ImageIcon />} toggle />
        <Props $bottom={9}>
          <PropRow><span>Source Image</span><ObjectField><span>None (Sprite)</span><TargetIcon /></ObjectField></PropRow>
          <PropRow><span>Color</span><ColorField aria-label="Color"><DropperIcon /></ColorField></PropRow>
          <PropRow><span>Material</span><ObjectField><Ball /><span>Anton SDF - Drop Shadow</span><TargetIcon /></ObjectField></PropRow>
          <PropRow><label htmlFor="rt">Raycast Target</label><Check id="rt" defaultChecked /></PropRow>
          <FoldRow $top={2}><Fold $w={24} aria-label="Expand padding"><FoldArrow dir="right" /></Fold>Raycast Padding</FoldRow>
          <PropRow $top={4}><label htmlFor="mask">Maskable</label><Check id="mask" defaultChecked /></PropRow>
        </Props>

        <MaterialBox>
          <MaterialTitle><span>Anton SDF - Drop Shadow</span><div><HelpIcon /><TuneIcon /><Dots /></div></MaterialTitle>
          <ShaderRow>
            <Fold aria-label="Expand material"><FoldArrow dir="right" /></Fold>
            <span>Shader</span>
            <Pick label="Shader" value="TextMeshPro" tone="raised" w={74} />
            <RaisedButton $w={56}>Edit...</RaisedButton>
            <RaisedButton $w={54} aria-label="Shader variants"><ListIcon /><Caret /></RaisedButton>
          </ShaderRow>
        </MaterialBox>
        <Footer />
        <AddComponent>Add Component</AddComponent>
      </InspectorContent>
      <Scroll from={6} to={20} />
    </InspectorBody>
    <PreviewBar>
      <PreviewPick>background<Caret /></PreviewPick>
      <Grip />
      <Cell $w={1} />
      <IconButton aria-label="Preview menu"><Dots /></IconButton>
    </PreviewBar>
    <Preview>
      <span>background</span>
      <span>Image Size: 0x0</span>
    </Preview>
    <PreviewFoot />
  </Panel>
);

/* ---------- Status and task bars ---------- */

const StatusBar = styled.footer`
  display: flex;
  justify-content: flex-end;
  padding: 1px 2px 0 0;
`;

const TaskBar = styled.div`
  background: linear-gradient(90deg, #2b0f2e 60px, #75577a 60px, #75577a 420px, #2b0f2e 420px, #2b0f2e 856px, #5b1664 856px, #5b1664 918px, #2b0f2e 918px);
`;

const menus = ['File', 'Edit', 'Assets', 'GameObject', 'Component', 'Services', 'Window', 'Help'];

export default function App() {
  return (
    <Window>
      <GlobalStyle />
      <TitleBar>
        <svg width="15" height="18" viewBox="0 0 15 18" aria-hidden="true">
          <path d="M7.500 0 15 4v9l-7.500 5L0 13V4z" fill="#26302b" />
          <path d="M7.500 2.500 12.500 5v6.500l-5 3.500-5-3.500V5z" fill="#c9d1cc" />
          <path d="M7.500 8.500v5M7.500 8.500 4 6.500M7.500 8.500l3.500-2" stroke="#26302b" strokeWidth="1.500" />
        </svg>
        prim - Login - Windows, Mac, Linux - Unity 2022.3.9f1 &lt;DX11&gt;
        <Spacer />
        <Group $gap={0}>
          <IconButton $w={58} aria-label="Minimize"><Svg w={12} box="0 0 12 12"><path d="M0 5.500h12" strokeWidth="1" /></Svg></IconButton>
          <IconButton $w={58} aria-label="Restore"><Svg w={12} box="0 0 12 12"><path d="M.5 2.500h9v9h-9zM2.500 2.500v-2h9v9h-2" strokeWidth="1" /></Svg></IconButton>
          <IconButton $w={58} aria-label="Close"><Svg w={12} box="0 0 12 12"><path d="m0 0 12 12M12 0 0 12" strokeWidth="1.200" /></Svg></IconButton>
        </Group>
      </TitleBar>
      <MenuBar>
        {menus.map((m) => <button key={m}>{m}</button>)}
      </MenuBar>
      <MainBar>
        <Group $gap={6}>
          <ToolButton $w={63}>Sign in</ToolButton>
          <ToolButton $w={38} aria-label="Cloud services"><CloudIcon /></ToolButton>
          <ToolButton $w={38} aria-label="Version control"><DevOpsIcon /></ToolButton>
        </Group>
        <Group $gap={1}>
          <ToolButton $w={39} $on aria-label="Play">
            <svg width="10" height="13" viewBox="0 0 9 13" fill="currentColor"><path d="M0 0v13l9-6.500z" /></svg>
          </ToolButton>
          <ToolButton $w={39} aria-label="Pause">
            <svg width="10" height="12" viewBox="0 0 10 12" fill="currentColor"><path d="M0 0h4v12H0zM6 0h4v12H6z" /></svg>
          </ToolButton>
          <ToolButton $w={39} aria-label="Step">
            <svg width="12" height="13" viewBox="0 0 12 13" fill="currentColor"><path d="M0 0v13l9-6.500zM10 0h2v13h-2z" /></svg>
          </ToolButton>
        </Group>
        <Group $gap={6} $end>
          <ToolButton $w={38} aria-label="Undo history"><HistoryIcon /></ToolButton>
          <ToolButton $w={38} aria-label="Search"><SearchIcon /></ToolButton>
          <Pick label="Layers" value="Layers" tone="tool" w={98} />
          <Pick label="Layout" value="Layout" tone="tool" w={98} />
        </Group>
      </MainBar>
      <Main>
        <Workspace>
          <Upper>
            <Hierarchy />
            <Game />
          </Upper>
          <Project />
        </Workspace>
        <Inspector />
      </Main>
      <StatusBar>
        <IconButton $w={33} aria-label="Debugger off"><BugIcon struck /></IconButton>
        <IconButton $w={33} aria-label="Cache server off"><DatabaseOffIcon /></IconButton>
        <IconButton $w={33} aria-label="Auto lighting off"><LightOffIcon /></IconButton>
        <IconButton $w={33} aria-label="Background tasks"><CheckCircleIcon /></IconButton>
      </StatusBar>
      <TaskBar />
    </Window>
  );
}
